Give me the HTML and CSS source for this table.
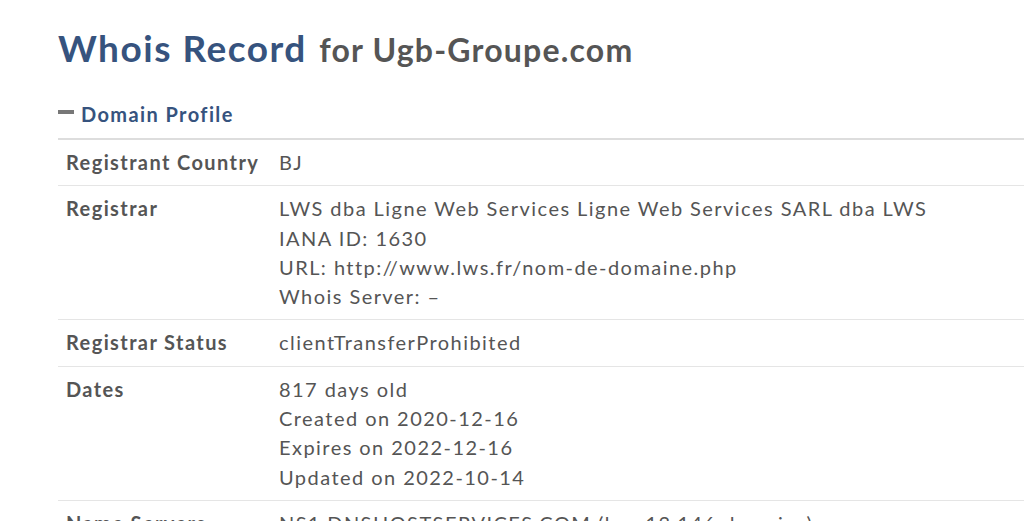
FILE: index.html
```html
<!DOCTYPE html>
<html>
<head>
<meta charset="utf-8">
<link rel="stylesheet" href="styles.css">
</head>
<body>
<div class="page">
  <h1 class="title">Whois Record <small class="domain">for Ugb-Groupe.com</small></h1>
  <h2 class="section"><span class="minus"></span>Domain Profile</h2>
  <table class="profile">
    <tr>
      <th>Registrant Country</th>
      <td>BJ</td>
    </tr>
    <tr>
      <th>Registrar</th>
      <td>LWS dba Ligne Web Services Ligne Web Services SARL dba LWS<br>IANA ID: 1630<br>URL: http://www.lws.fr/nom-de-domaine.php<br>Whois Server: &ndash;</td>
    </tr>
    <tr>
      <th>Registrar Status</th>
      <td>clientTransferProhibited</td>
    </tr>
    <tr>
      <th>Dates</th>
      <td>817 days old<br>Created on 2020-12-16<br>Expires on 2022-12-16<br>Updated on 2022-10-14</td>
    </tr>
    <tr>
      <th>Name Servers</th>
      <td>NS1.DNSHOSTSERVICES.COM (has 13,146 domains)</td>
    </tr>
  </table>
</div>
</body>
</html>
```

FILE: styles.css
```css
html, body {
  margin: 0;
  padding: 0;
  background: #fff;
  overflow: hidden;
}
.page {
  font-family: Lato, "Open Sans", sans-serif;
  padding-left: 58px;
  width: 1100px;
  color: #555;
}
.title {
  margin: 0;
  padding-top: 26px;
  font-size: 37px;
  line-height: 44px;
  font-weight: 700;
  color: #36537e;
  letter-spacing: 1.5px;
}
.domain {
  font-size: 32px;
  color: #555;
  font-weight: 700;
  letter-spacing: 1.2px;
  margin-left: 2px;
}
.section {
  margin: 28px 0 0 0;
  font-size: 20px;
  line-height: 28px;
  font-weight: 700;
  color: #36537e;
  display: flex;
  align-items: center;
  letter-spacing: 1.4px;
  padding-bottom: 10px;
  border-bottom: 2px solid #ddd;
}
.minus {
  display: inline-block;
  width: 16px;
  height: 4px;
  background: #777;
  margin-right: 7px;
  margin-top: -4px;
}
.profile {
  border-collapse: collapse;
  width: 100%;
  font-size: 20px;
  line-height: 29.3px;
  letter-spacing: 1.45px;
}
.profile th,
.profile td {
  text-align: left;
  vertical-align: top;
  padding: 8px 8px;
  border-bottom: 1px solid #e5e5e5;
}
.profile th {
  width: 197px;
  font-weight: 700;
  color: #555;
  letter-spacing: 1.4px;
}
.profile td {
  font-weight: 400;
  color: #555;
}
```
